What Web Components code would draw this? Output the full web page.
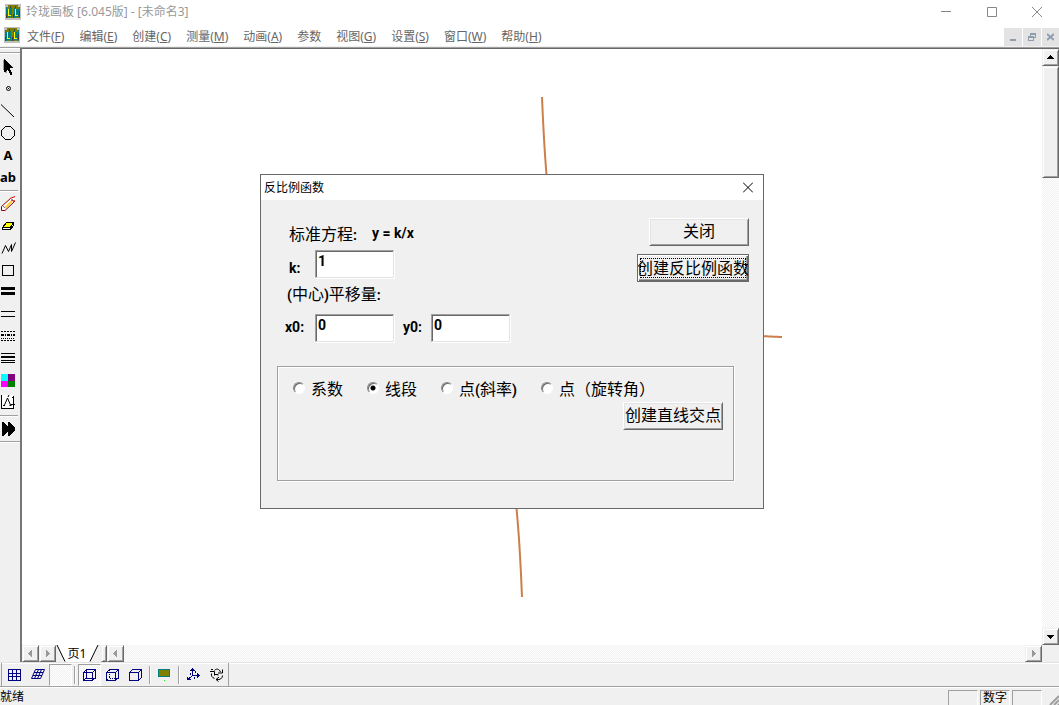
<!DOCTYPE html>
<html lang="zh-CN">
<head>
<meta charset="utf-8">
<title>玲珑画板</title>
<style>
  html, body { margin: 0; height: 100%; }
  body { overflow: hidden; background: #fff; font: 12px/16px "Noto Sans", "Noto Sans CJK SC", sans-serif; color: #000; }
</style>
</head>
<body>
<board-app></board-app>
<script>
const LOGO = `<svg width="16" height="16" viewBox="0 0 16 16" shape-rendering="crispEdges" aria-hidden="true"><path fill="#c0c0c0" d="M0 0h16v16H0z"/><path fill="#008080" d="M1 3h14v11H1z"/><path fill="#808000" d="M3 1h10v3H3zM2 3h3v2H2zM11 3h3v2h-3zM7 4h2v10H7zM3 13h3v1H3zM10 13h4v1h-4z"/><path fill="#404040" d="M5 2h1v2H5zM10 2h1v2h-1zM1 10h1v4H1zM14 7h1v6h-1zM8 10h1v4H8z"/><path fill="#ff0" d="M3 5h1v6h2v1H3zM10 5h1v6h2v1h-3z"/></svg>`;
const RAISED = `border: 1px solid; border-color: #f0f0f0 #696969 #696969 #f0f0f0; box-shadow: inset 1px 1px #fff, inset -1px -1px #a0a0a0; background: #f0f0f0;`;
const DITHER = `background: conic-gradient(#fff 25%, #f0f0f0 0 50%, #fff 0 75%, #f0f0f0 0) 0 0 / 2px 2px;`;
const BASE = `*, *::before { box-sizing: border-box; } button { font: inherit; color: inherit; margin: 0; padding: 0; border: 0; background: none; } svg { display: block; flex: none; }`;

function define(name, css, html, ready) {
  const template = document.createElement('template');
  template.innerHTML = `<style>${BASE}${css}</style>${html}`;
  customElements.define(name, class extends HTMLElement {
    constructor() {
      super();
      this.attachShadow({ mode: 'open' }).append(template.content.cloneNode(true));
    }
    connectedCallback() { if (ready) ready(this, this.shadowRoot); }
  });
}

define('title-bar', `
  :host { display: flex; align-items: center; height: 24px; padding-left: 5px; color: #999; }
  span { margin-left: 5px; flex: 1; }
  button { width: 46px; height: 22px; display: grid; place-items: center; }
  button:last-child { width: 44px; }
`, `${LOGO}<span>玲珑画板 [6.045版] - [未命名3]</span>
  <button aria-label="最小化"><svg width="10" height="11"><path d="M0 4.500h10" stroke="#888"/></svg></button>
  <button aria-label="最大化"><svg width="10" height="11"><path d="M.5.5h9v9h-9z" fill="none" stroke="#888"/></svg></button>
  <button aria-label="关闭"><svg width="10" height="11"><path d="M0 0l10 10M10 0L0 10" stroke="#888"/></svg></button>`);

define('menu-item', `
  :host { display: block; }
  button { height: 18px; line-height: 18px; white-space: nowrap; }
`, `<button><slot></slot></button>`);

define('menu-bar', `
  :host { display: flex; align-items: flex-end; height: 22px; padding-left: 4px; color: #666; }
  :host > svg, .logo { align-self: center; }
  nav { display: flex; gap: 15px; margin-left: 7px; flex: 1; }
  .mdi { display: flex; gap: 1px; }
  .mdi button { width: 18px; height: 18px; background: #e3e3e3; display: grid; place-items: center; }
  .mdi button:last-child { width: 17px; }
`, `<span class="logo">${LOGO}</span><nav>
  <menu-item>文件(<u>F</u>)</menu-item><menu-item>编辑(<u>E</u>)</menu-item><menu-item>创建(<u>C</u>)</menu-item>
  <menu-item>测量(<u>M</u>)</menu-item><menu-item>动画(<u>A</u>)</menu-item><menu-item>参数</menu-item>
  <menu-item>视图(<u>G</u>)</menu-item><menu-item>设置(<u>S</u>)</menu-item><menu-item>窗口(<u>W</u>)</menu-item><menu-item>帮助(<u>H</u>)</menu-item></nav>
  <div class="mdi">
  <button aria-label="最小化窗口"><svg width="8" height="8"><path d="M1 6h6v2H1z" fill="#8e9dad"/></svg></button>
  <button aria-label="还原窗口"><svg width="8" height="8" shape-rendering="crispEdges"><path d="M2 0h6v5H6V4h1V2H3v1H2zM0 3h6v5H0zM1 5v2h4V5z" fill-rule="evenodd" fill="#8e9dad"/></svg></button>
  <button aria-label="关闭窗口"><svg width="7" height="8"><path d="M0 1l7 6M7 1L0 7" stroke="#8e9dad" stroke-width="2"/></svg></button></div>`);

define('tool-button', `
  :host { display: block; }
  button { display: grid; place-items: center; width: var(--tool-width, 16px); height: 22px; }
  :host([pressed]) button { border: 1px solid; border-color: #a0a0a0 #fff #fff #a0a0a0; ${DITHER} }
`, `<button><slot></slot></button>`, (host, root) => root.querySelector('button').setAttribute('aria-label', host.getAttribute('name')));

const side = (name, body) => `<tool-button name="${name}"><svg width="16" height="16" viewBox="0 0 16 16" shape-rendering="crispEdges" fill="none" stroke="#000">${body}</svg></tool-button>`;
define('side-tools', `
  :host { display: flex; flex-direction: column; width: 20px; flex: none; background: #f0f0f0; border-top: 1px solid #fff; }
  .grip { height: 4px; margin-bottom: 3px; border-bottom: 1px solid #a0a0a0; box-shadow: 0 1px #fff; }
  hr { width: 18px; height: 2px; margin: 2px 0 1px; border: 0; border-top: 1px solid #a0a0a0; background: #fff; flex: none; }
  hr.end { width: 20px; margin-top: 1px; }
  b { font: bold 13px/16px "Noto Sans", sans-serif; }
`, `<div class="grip"></div>` +
  side('选择', '<path stroke="none" fill="#a0a0a0" d="M3 1h1v10H3zM5 11h2v3H5zM4 11h1v1H4z"/><path stroke="none" fill="#000" d="M4 0h1v1h1v1h1v1h1v1h1v1h1v1h1v1h1v1h1v1h-3v2h1v2h1v3h-2v-2H9v-2H8v-1H7v1H6v1H4z"/>') +
  side('点', '<circle cx="8.5" cy="7.5" r="2" shape-rendering="auto"/><path d="M8 7.5h1"/>') +
  side('线段', '<path d="M1 1.500L14 14" shape-rendering="auto"/>') +
  side('圆', '<path d="M5.500 1.500h5l4 4v5l-4 4h-5l-4-4v-5z"/>') +
  `<tool-button name="文字"><b>A</b></tool-button><tool-button name="标签"><b>ab</b></tool-button><hr>` +
  side('画笔', '<g shape-rendering="auto"><path stroke="none" fill="#fff" d="M2 11L12 1l3 3L5 14H2z"/><path stroke="#ffcf30" stroke-width="2" d="M5 12L12 5"/><path stroke="#900000" d="M1.500 10.500L10.500 2.500M5 14.500L15 5"/><path stroke="#e00000" d="M10 2.500l5-2M11 4l4 1"/><path stroke="#777" d="M12 3l2 3M3 10l2 2"/><path stroke="#900000" d="M1.500 10.500v4H5"/></g>') +
  side('橡皮', '<path fill="#ff0" d="M6.500 4.500h7l-3 5h-8z"/><path fill="#fff" d="M2.500 9.500h8v2h-8zM10.500 11.500l3-4v-3l-3 5z"/>') +
  side('折线', '<path d="M2 13.500L5.500 5.500L8.500 11.500L11.500 4.500V11.500L15.500 2.500" shape-rendering="auto"/>') +
  side('矩形', '<path d="M2.500 3.500h11v10h-11z"/>') +
  side('粗线', '<path stroke-width="3" d="M1 4.500h14M1 9.500h14"/>') +
  side('细线', '<path d="M1 5.500h14M1 10.500h14"/>') +
  side('虚线', '<path stroke-dasharray="2 1" d="M1 3.500h14M1 12.500h14"/><path stroke-width="2" stroke-dasharray="3 1 1 1" d="M1 7h14"/><path stroke-dasharray="1 1" d="M1 10.500h14"/>') +
  side('线型', '<path d="M1 3.500h14M1 10.500h14M1 12.500h14"/><path stroke-width="2" d="M1 7h14"/>') +
  side('颜色', '<g stroke="none"><path fill="#0ff" d="M1 2h7v7H1z"/><path fill="#800080" d="M8 2h7v7H8z"/><path fill="#f0f" d="M1 9h7v6H1z"/><path fill="#008000" d="M8 9h7v6H8z"/></g>') +
  side('变换', '<path stroke="none" fill="#fff" d="M1 1h12v14H1z"/><path d="M1.500 1v13.500h12V2M12 3.500h1M11 10.500h4"/><path shape-rendering="auto" d="M3 11.500h2M4.500 11l3-7 3 7M9.500 11.500h2M8 3l1-2"/>') +
  `<hr>` +
  side('播放', '<path stroke="none" fill="#000" d="M2 1h1l5 5V1h1l6 6v2l-6 6H8v-5l-5 5H2z"/>') +
  `<hr class="end">`);

define('scroll-button', `
  :host { display: block; flex: none; width: 17px; height: 17px; }
  button { width: 100%; height: 100%; display: grid; place-items: center; color: #999; ${RAISED} }
  :host([active]) button { color: #000; }
  svg { fill: currentColor; }
  :host([dir-down]) svg { transform: rotate(180deg); }
  :host([dir-left]) svg { transform: rotate(-90deg); }
  :host([dir-right]) svg { transform: rotate(90deg); }
`, `<button aria-label="滚动"><svg width="7" height="7" shape-rendering="crispEdges"><path d="M3 1h1v1h1v1h1v1h1v1H0V4h1V3h1V2h1z"/></svg></button>`);

define('vertical-scroll', `
  :host { display: flex; flex-direction: column; width: 17px; ${DITHER} }
  .track { flex: 1; }
  .thumb { height: 112px; ${RAISED} }
`, `<scroll-button active></scroll-button><div class="track"><div class="thumb"></div></div><scroll-button active dir-down></scroll-button>`);

define('page-tabs', `
  :host { display: flex; height: 17px; ${DITHER} }
  .tab { display: grid; width: 45px; background: #f0f0f0; }
  .tab > * { grid-area: 1 / 1; }
  .tab button { line-height: 17px; padding-right: 3px; }
  .split { width: 6px; ${RAISED} }
  .track { flex: 1; }
`, `<scroll-button dir-left></scroll-button><scroll-button dir-right></scroll-button>
  <div class="tab"><svg width="45" height="17"><path d="M1 0l9 17h24l8-17z" fill="#fff"/><path d="M1 0l8 16.500M34 16.500L42 0" stroke="#000" fill="none"/></svg><button>页1</button></div>
  <div class="split"></div><scroll-button dir-left></scroll-button><div class="track"></div><scroll-button dir-right></scroll-button>`);

define('graph-canvas', `
  :host { display: grid; place-items: center; background: #fff; overflow: hidden; min-height: 0; }
  path { fill: none; stroke: #cd7f4b; stroke-width: 2; }
`, `<svg width="500" height="500" viewBox="-250 -250 500 500" role="img" aria-label="反比例函数图像"><path/></svg>`,
  (host, root) => {
    const k = 2500;
    const branch = sign => {
      const points = [];
      for (let x = 10; x <= 250; x += 1) points.push(`${sign * x},${-sign * k / x}`);
      return 'M' + points.join('L');
    };
    root.querySelector('path').setAttribute('d', branch(1) + branch(-1));
  });

define('bottom-tools', `
  :host { display: flex; height: 25px; padding-left: 1px; background: #f0f0f0; border-top: 1px solid #e3e3e3; border-bottom: 1px solid #a0a0a0; box-shadow: inset 0 1px #fff; --tool-width: 23px; flex: none; }
  .bar { display: flex; align-items: center; padding-left: 1px; border-right: 1px solid #a0a0a0; border-left: 1px solid #a0a0a0; }
  i { width: 2px; height: 18px; margin: 0 2px; border-left: 1px solid #a0a0a0; background: #fff; }
`, (() => {
  const t = (name, body, attr = '') => `<tool-button name="${name}" ${attr}><svg width="15" height="15" viewBox="0 0 15 15" shape-rendering="crispEdges" fill="none" stroke="#000080">${body}</svg></tool-button>`;
  const cube = '<path d="M1.500 5.500h9v8h-9zM1.500 5.500l3-3h9l-3 3M13.500 2.500v8l-3 3"/>';
  return `<div class="bar">` +
    t('网格', '<path d="M1.500 2.500h12v11h-12zM5.500 2v12M9.500 2v12M1 6.500h12M1 9.500h12"/>') +
    t('斜网格', '<path shape-rendering="auto" d="M5.500 2.500h9l-4 9h-9zM8.500 2.500l-4 9M11.500 2.500l-4 9M4 5.500h9M3 8.500h9"/>') +
    t('空白', '', 'pressed') + `<i></i>` +
    t('透视立方体', cube + '<path d="M4.500 3v8h9M4.500 10.500l-3 3"/>', 'pressed') +
    t('虚线立方体', cube + '<path stroke-dasharray="1 1" d="M4.500 3v8h9M4.500 10.500l-3 3"/>') +
    t('立方体', cube) + `<i></i>` +
    t('黑板', '<path fill="#808000" stroke="#008080" d="M1.500 2.500h11v7h-11z"/><path stroke="#0f0" d="M7 13.500h1"/>') + `<i></i>` +
    t('坐标轴', '<path d="M6.500 1v8M6 8.500h7M7 8.500l-4 3"/><path stroke="none" fill="#000080" d="M6 1h1v1h1v1h1v1H4V3h1V2h1zM11 6h1v1h1v1h1v1h-1v1h-1v1h-1zM1 10h1v1h2v1h1v1H1zM9 4h1v2H9zM4 6h1v2H4zM8 10h1v2H8z"/>') +
    t('旋转', '<g shape-rendering="auto" stroke="#000"><path d="M5.500 3.500C7 1.500 10 1.500 11.500 5M13.500 8.500C13.500 11.500 11 13 7.500 12.500M5.500 11.500C3 10.500 2 9 2.500 6.500"/><path d="M9 6h4.500V2.500M10 10l-3 2.500 2.500 2M1 4.500h4.500v4M2 2.500h2"/><path d="M5 7.500h4v1"/></g>') +
    `</div>`;
})());

define('status-bar', `
  :host { display: flex; height: 18px; padding: 3px 0 0; gap: 2px; background: #f0f0f0; box-shadow: inset 0 1px #fff; flex: none; }
  .text { flex: 1; line-height: 14px; }
  .pane { width: 30px; height: 15px; line-height: 13px; text-align: center; border: 1px solid; border-color: #a0a0a0 #fff #f0f0f0 #a0a0a0; border-bottom: 0; }
  svg { margin-left: 3px; width: 12px; }
`, `<div class="text">就绪</div><div class="pane"></div><div class="pane">数字</div><div class="pane"></div>
  <svg width="12" height="15"><path d="M3 15l9-9M7 15l5-5M11 15l1-1" stroke="#a0a0a0" stroke-width="2"/></svg>`);

define('push-button', `
  :host { display: block; }
  button { width: 100%; height: 28px; line-height: 22px; overflow: hidden; white-space: nowrap; display: flex; justify-content: center; ${RAISED} border-color: #fff #696969 #696969 #fff; box-shadow: inset 1px 1px #e3e3e3, inset -1px -1px #a0a0a0; }
  :host([default]) button { border-color: #696969; box-shadow: inset 1px 1px #fff, inset -1px -1px #696969, inset -2px -2px #a0a0a0; padding: 2px; align-items: center; }
  :host([default]) span { display: flex; justify-content: center; width: 100%; height: 20px; line-height: 16px; border: 1px dotted #000; }
`, `<button><span><slot></slot></span></button>`);

define('number-field', `
  :host { display: block; }
  label { display: flex; height: 28px; }
  b { width: var(--label-width, 30px); padding-left: var(--label-inset, 0); font: var(--latin); line-height: 26px; }
  input { width: 79px; height: 28px; margin: 0; padding: 0 2px 6px; font: var(--latin); color: #000; background: #fff; border: 1px solid; border-color: #a0a0a0 #e3e3e3 #e3e3e3 #a0a0a0; box-shadow: inset 1px 1px #696969, 1px 1px #fff; border-radius: 0; outline: 0; }
  :host([low]) b { line-height: 36px; }
`, `<label><b></b><input type="text"></label>`, (host, root) => {
  root.querySelector('b').textContent = host.getAttribute('label');
  root.querySelector('input').value = host.getAttribute('value');
});

define('mode-choices', `
  :host { display: flex; gap: 24px; height: 20px; line-height: 20px; }
  label { display: flex; align-items: center; gap: 6px; height: 18px; white-space: nowrap; }
  input { appearance: none; width: 12px; height: 12px; margin: 0; border: 1px solid; border-color: #888 #fff #fff #888; border-radius: 50%; background: #fff; box-shadow: inset 1px 1px #696969; }
  input:checked { background: radial-gradient(circle, #000 2px, #fff 3px); }
  b { font: var(--latin); line-height: 16px; }
`, `<label><input type="radio" name="mode"><span>系数</span></label>
  <label><input type="radio" name="mode" checked><span>线段</span></label>
  <label><input type="radio" name="mode"><span>点<b>(</b>斜率<b>)</b></span></label>
  <label><input type="radio" name="mode"><span>点（旋转角）</span></label>`);

define('function-dialog', `
  :host { display: block; width: 504px; border: 1px solid #696969; background: #f0f0f0; --latin: bold 14px/18px Roboto, sans-serif; }
  header { display: flex; justify-content: space-between; align-items: center; height: 25px; padding-left: 3px; background: #fff; }
  header button { width: 30px; height: 25px; display: grid; place-items: center; }
  .body { padding: 18px 14px 27px 16px; font: 16px/26px "Noto Sans CJK SC", sans-serif; }
  .top { display: flex; justify-content: space-between; align-items: flex-start; }
  .form { display: grid; gap: 2px; padding: 2px 0 0 8px; }
  .form b { font: var(--latin); line-height: 26px; }
  .eq, .shift { height: 28px; }
  .eq { display: flex; gap: 15px; padding-left: 4px; }
  .shift { padding-left: 2px; margin-bottom: 4px; }
  .pair { display: flex; gap: 9px; }
  .pair number-field:last-child { --label-width: 28px; }
  .k { --label-inset: 4px; }
  .actions { display: grid; gap: 8px; justify-items: end; }
  .close { width: 100px; }
  .create { width: 112px; }
  fieldset { margin: 24px 15px 0 0; padding: 12px 10px 50px 15px; border: 1px solid #a0a0a0; box-shadow: 1px 1px #fff, inset 1px 1px #fff; min-width: 0; }
  .cross { width: 100px; margin: 3px 0 0 auto; }
`, `<header><span>反比例函数</span><button aria-label="关闭"><svg width="10" height="12"><path d="M0 .5l10 10M10 .5L0 10.500" stroke="#000"/></svg></button></header>
  <div class="body"><div class="top"><div class="form">
    <div class="eq"><span>标准方程<b>:</b></span><b>y = k/x</b></div>
    <number-field class="k" low label="k:" value="1"></number-field>
    <div class="shift"><b>(</b>中心<b>)</b>平移量<b>:</b></div>
    <div class="pair"><number-field label="x0:" value="0"></number-field><number-field label="y0:" value="0"></number-field></div>
  </div><div class="actions"><push-button class="close">关闭</push-button><push-button class="create" default>创建反比例函数</push-button></div></div>
  <fieldset aria-label="创建方式"><mode-choices></mode-choices><push-button class="cross">创建直线交点</push-button></fieldset></div>`);

define('board-app', `
  :host { display: flex; flex-direction: column; height: 100vh; }
  .main { flex: 1; display: flex; min-height: 0; border-top: 1px solid #a0a0a0; }
  .view { flex: 1; display: grid; grid-template: 1fr auto / 1fr auto; min-width: 0; border-top: 1px solid #696969; border-left: 2px solid #777; background: #f0f0f0; }
  .edge { height: 1px; background: #f0f0f0; flex: none; }
  /* The dialog is a floating window over the drawing board. */
  function-dialog { position: absolute; left: 260px; top: 174px; }
`, `<title-bar></title-bar><menu-bar></menu-bar><div class="edge"></div>
  <div class="main"><side-tools></side-tools><div class="view"><graph-canvas></graph-canvas><vertical-scroll></vertical-scroll><page-tabs></page-tabs></div></div>
  <bottom-tools></bottom-tools><status-bar></status-bar>
  <function-dialog></function-dialog>`);
</script>
</body>
</html>
